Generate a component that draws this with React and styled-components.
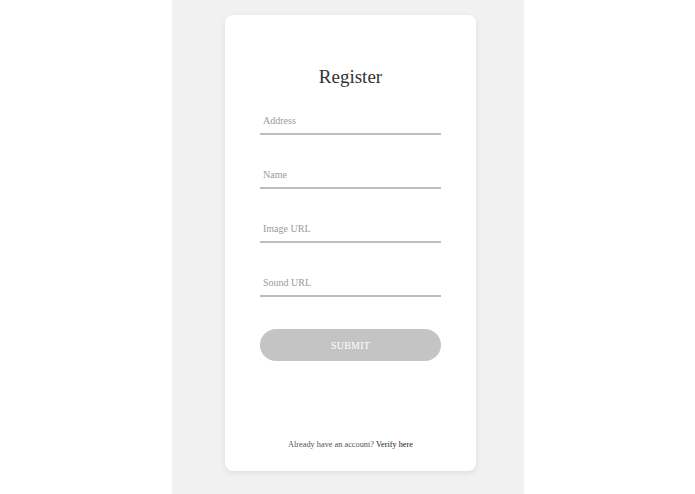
import React from "react";
import styled, { createGlobalStyle } from "styled-components";

const GlobalStyle = createGlobalStyle`
  html, body {
    margin: 0;
    padding: 0;
    background: #ffffff;
    font-family: "Liberation Serif", "Times New Roman", serif;
  }
`;

const Page = styled.div`
  display: flex;
  justify-content: center;
  min-height: 494px;
`;

const Column = styled.div`
  width: 352px;
  min-height: 494px;
  background: #f1f1f1;
  display: flex;
  justify-content: center;
  padding: 15px 0 0 6px;
  box-sizing: border-box;
`;

const Card = styled.div`
  width: 251px;
  height: 456px;
  background: #ffffff;
  border-radius: 8px;
  box-shadow: 0 2px 6px rgba(0, 0, 0, 0.08);
  box-sizing: border-box;
  padding: 49px 35px 20px;
  display: flex;
  flex-direction: column;
  align-items: stretch;
`;

const Title = styled.h1`
  margin: 0 0 15px;
  font-size: 19px;
  line-height: 26px;
  font-weight: normal;
  color: #333333;
  text-align: center;
`;

const Form = styled.form`
  display: flex;
  flex-direction: column;
  gap: 24px;
`;

const Field = styled.input`
  height: 30px;
  box-sizing: border-box;
  border: none;
  border-bottom: 2px solid #bdbdbd;
  padding: 2px 3px 0;
  font-family: inherit;
  font-size: 10px;
  color: #333;
  background: transparent;
  outline: none;

  &::placeholder {
    color: #9a9a9a;
  }
`;

const Submit = styled.button`
  margin-top: 8px;
  height: 32px;
  border: none;
  border-radius: 16px;
  background: #c4c4c4;
  color: #ffffff;
  font-family: inherit;
  font-size: 10px;
  letter-spacing: 0.2px;
  cursor: pointer;
`;

const Footer = styled.p`
  margin: auto 0 0;
  font-size: 8.3px;
  line-height: 12px;
  color: #555555;
  text-align: center;
`;

const FooterLink = styled.a`
  color: #222222;
  text-decoration: none;
  cursor: pointer;
`;

const fields = ["Address", "Name", "Image URL", "Sound URL"];

const App = () => {
  return (
    <>
      <GlobalStyle />
      <Page>
        <Column>
          <Card>
            <Title>Register</Title>
            <Form onSubmit={(e) => e.preventDefault()}>
              {fields.map((f) => (
                <Field key={f} placeholder={f} />
              ))}
              <Submit type="submit">SUBMIT</Submit>
            </Form>
            <Footer>
              Already have an account? <FooterLink>Verify here</FooterLink>
            </Footer>
          </Card>
        </Column>
      </Page>
    </>
  );
};

export default App;
